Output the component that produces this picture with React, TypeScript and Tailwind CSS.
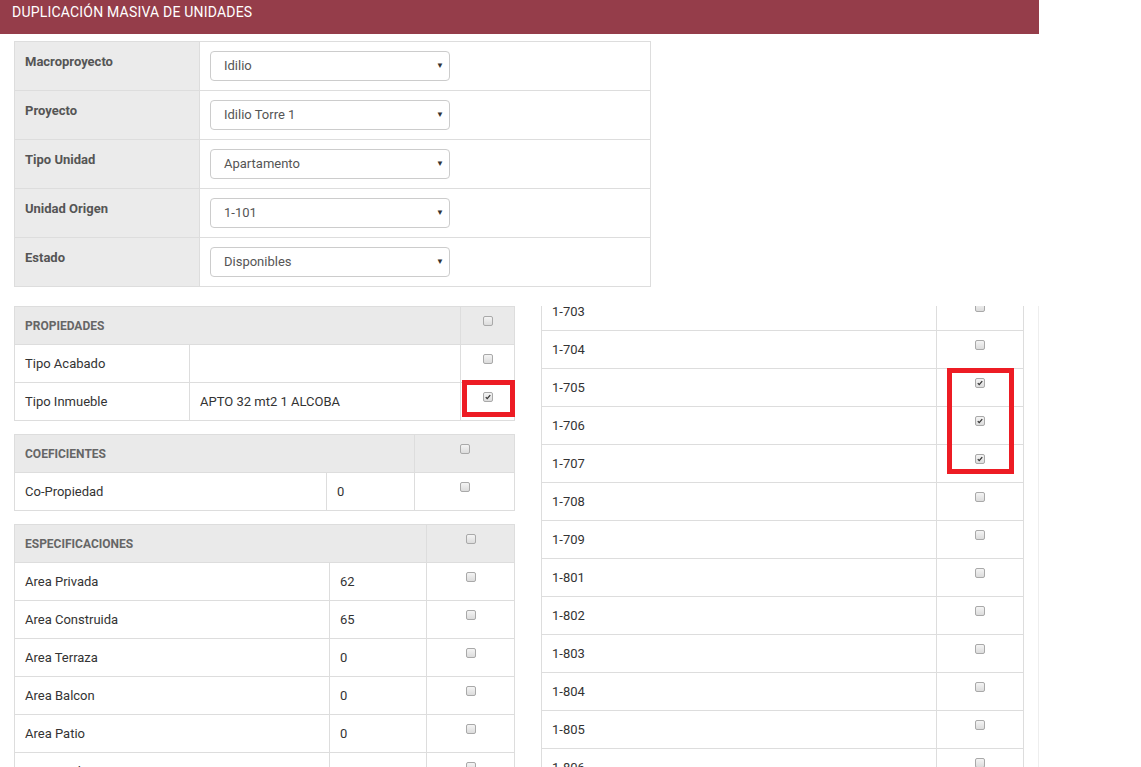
import React from "react";

type Field = { label: string; value: string };

const formFields: Field[] = [
  { label: "Macroproyecto", value: "Idilio" },
  { label: "Proyecto", value: "Idilio Torre 1" },
  { label: "Tipo Unidad", value: "Apartamento" },
  { label: "Unidad Origen", value: "1-101" },
  { label: "Estado", value: "Disponibles" },
];

const especificaciones: [string, string][] = [
  ["Area Privada", "62"],
  ["Area Construida", "65"],
  ["Area Terraza", "0"],
  ["Area Balcon", "0"],
  ["Area Patio", "0"],
  ["Area Jardin", "0"],
];

const unidades: { name: string; checked: boolean }[] = [
  { name: "1-703", checked: false },
  { name: "1-704", checked: false },
  { name: "1-705", checked: true },
  { name: "1-706", checked: true },
  { name: "1-707", checked: true },
  { name: "1-708", checked: false },
  { name: "1-709", checked: false },
  { name: "1-801", checked: false },
  { name: "1-802", checked: false },
  { name: "1-803", checked: false },
  { name: "1-804", checked: false },
  { name: "1-805", checked: false },
  { name: "1-806", checked: false },
];

function CheckBox({ checked = false }: { checked?: boolean }) {
  return (
    <div className="mx-auto mt-[9px] w-[10px] h-[10px] rounded-[2px] border border-[#a9a9a9] bg-gradient-to-b from-[#f4f4f4] to-[#dcdcdc] relative">
      {checked && (
        <svg viewBox="0 0 10 10" className="absolute inset-0 w-full h-full">
          <path d="M2.2 5.2 L4 7 L7.8 2.6" fill="none" stroke="#333" strokeWidth="1.6" />
        </svg>
      )}
    </div>
  );
}

function FakeSelect({ value }: { value: string }) {
  return (
    <div className="w-[240px] h-[30px] rounded-[4px] border border-[#cccccc] bg-white flex items-center justify-between pl-[13px] pr-[5px] text-[13px] text-[#555]">
      <span>{value}</span>
      <span className="text-[8px] text-[#333]">▼</span>
    </div>
  );
}

const td = "border border-[#dddddd] px-[10px] h-[38px] align-middle";
const tdCheck = "border border-[#dddddd] h-[38px] align-top p-0";
const th = "border border-[#dddddd] bg-[#eaeaea] px-[10px] h-[38px] align-middle text-left font-bold text-[12px] text-[#666] uppercase";

export default function App() {
  return (
    <div className="min-h-screen bg-white font-['Roboto',sans-serif] text-[13px] text-[#333]">
      <div className="w-[1039px] h-[34px] bg-[#953d4a] text-white text-[14px] leading-[16px] tracking-[0.2px] pt-[4px] px-[12px]">
        DUPLICACIÓN MASIVA DE UNIDADES
      </div>

      <div className="pl-[14px] pt-[7px]">
        <table className="w-[637px] border-collapse">
          <tbody>
            {formFields.map((f) => (
              <tr key={f.label} className="h-[49px]">
                <th className="w-[185px] border border-[#dddddd] bg-[#ebebeb] align-top pt-[10px] px-[10px] text-left font-bold text-[13px] text-[#555]">
                  {f.label}
                </th>
                <td className="border border-[#dddddd] px-[10px] align-middle">
                  <FakeSelect value={f.value} />
                </td>
              </tr>
            ))}
          </tbody>
        </table>

        <div className="flex items-start mt-[19px]">
          <div className="w-[501px] flex flex-col gap-[13px]">
            <table className="w-full border-collapse">
              <tbody>
                <tr>
                  <th className={th} colSpan={2}>Propiedades</th>
                  <td className={`${tdCheck} bg-[#eaeaea] w-[54px]`}><CheckBox /></td>
                </tr>
                <tr>
                  <td className={`${td} w-[175px]`}>Tipo Acabado</td>
                  <td className={td}></td>
                  <td className={tdCheck}><CheckBox /></td>
                </tr>
                <tr>
                  <td className={td}>Tipo Inmueble</td>
                  <td className={td}>APTO 32 mt2 1 ALCOBA</td>
                  <td className={`${tdCheck} relative`}>
                    <CheckBox checked />
                    <div className="absolute left-[1px] right-[-1px] top-[-3px] bottom-[3px] border-[5px] border-[#ed1c24]" />
                  </td>
                </tr>
              </tbody>
            </table>

            <table className="w-full border-collapse">
              <tbody>
                <tr>
                  <th className={th} colSpan={2}>Coeficientes</th>
                  <td className={`${tdCheck} bg-[#eaeaea] w-[100px]`}><CheckBox /></td>
                </tr>
                <tr>
                  <td className={`${td} w-[312px]`}>Co-Propiedad</td>
                  <td className={td}>0</td>
                  <td className={tdCheck}><CheckBox /></td>
                </tr>
              </tbody>
            </table>

            <table className="w-full border-collapse">
              <tbody>
                <tr>
                  <th className={th} colSpan={2}>Especificaciones</th>
                  <td className={`${tdCheck} bg-[#eaeaea] w-[88px]`}><CheckBox /></td>
                </tr>
                {especificaciones.map(([label, value]) => (
                  <tr key={label}>
                    <td className={`${td} w-[315px]`}>{label}</td>
                    <td className={td}>{value}</td>
                    <td className={tdCheck}><CheckBox /></td>
                  </tr>
                ))}
              </tbody>
            </table>
          </div>

          <div className="ml-[26px] w-[498px] h-[480px] overflow-hidden border-r border-[#eeeeee]">
            <div className="relative -mt-[14px]">
              <table className="w-[483px] border-collapse">
                <tbody>
                  {unidades.map((u) => (
                    <tr key={u.name}>
                      <td className={`${td} w-[395px]`}>{u.name}</td>
                      <td className={tdCheck}><CheckBox checked={u.checked} /></td>
                    </tr>
                  ))}
                </tbody>
              </table>
              <div className="absolute left-[406px] top-[76px] w-[67px] h-[106px] border-[5px] border-[#ed1c24]" />
            </div>
          </div>
        </div>
      </div>
    </div>
  );
}
